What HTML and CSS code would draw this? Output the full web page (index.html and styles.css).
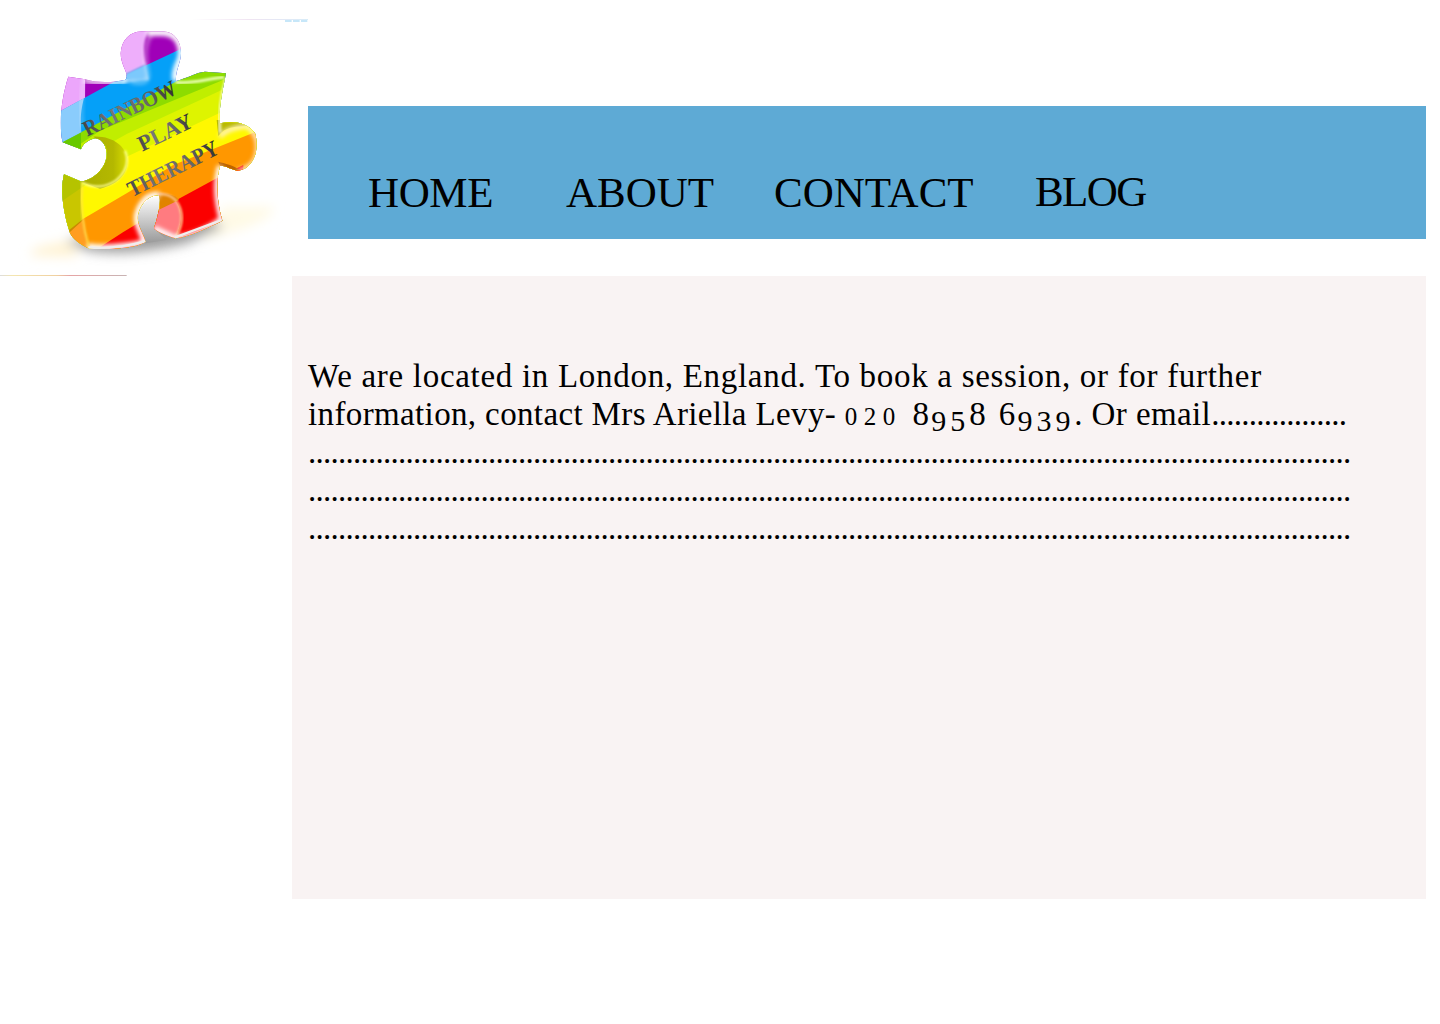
FILE: index.html
```html
<!DOCTYPE html>
<html lang="en">
<head>
<meta charset="utf-8">
<title>Rainbow Play Therapy</title>
<link rel="stylesheet" href="styles.css">
</head>
<body>
<header class="header">
  <svg class="logo" viewBox="0 27 924 771" role="img" aria-label="Rainbow Play Therapy">
    <defs>
      <clipPath id="piece"><path d="M205 200L255 208C300 222 350 215 375 210C392 195 362 170 362 130C364 90 390 65 425 64L490 64C525 66 543 95 543 130C542 160 525 185 528 213C560 205 590 187 615 185L678 190C668 240 655 300 660 340C700 333 740 335 765 370C780 420 760 475 715 482C690 480 675 465 660 468C645 520 652 580 667 632C630 650 570 680 525 685C495 675 470 665 462 655C480 600 482 570 478 555C440 555 415 590 413 625C415 655 435 680 436 695C410 715 320 720 265 715C240 700 220 690 210 668C190 610 180 540 192 493L245 515C275 510 320 480 320 430C318 400 300 385 285 385C265 390 250 400 243 418L188 397C175 340 185 260 205 200Z"/></clipPath>
      <filter id="b3"><feGaussianBlur stdDeviation="3"/></filter>
      <filter id="b6" x="-30%" y="-30%" width="160%" height="160%"><feGaussianBlur stdDeviation="6"/></filter>
      <filter id="b18" x="-40%" y="-60%" width="180%" height="220%"><feGaussianBlur stdDeviation="18"/></filter>
      <linearGradient id="ink"><stop offset="0" stop-color="#444"/><stop offset=".3" stop-color="#777"/><stop offset=".7" stop-color="#666"/><stop offset="1" stop-color="#2c2c2c"/></linearGradient>
      <linearGradient id="olive" x1="0" y1="0" x2="1" y2="0"><stop offset="0" stop-color="#a9ad00"/><stop offset=".7" stop-color="#b4b800"/><stop offset="1" stop-color="#d8dc00"/></linearGradient>
      <linearGradient id="hole" x1="0" y1="0" x2="0" y2="1"><stop offset="0" stop-color="#fff"/><stop offset="1" stop-color="#999"/></linearGradient>
      <linearGradient id="topline"><stop offset="0" stop-color="#fff"/><stop offset=".5" stop-color="#f0e4f2"/><stop offset="1" stop-color="#d8ecf8"/></linearGradient>
      <linearGradient id="footline"><stop offset="0" stop-color="#ddd"/><stop offset=".1" stop-color="#f4e6b0"/><stop offset=".45" stop-color="#f0d0a0"/><stop offset=".55" stop-color="#e6a5a5"/><stop offset="1" stop-color="#c8b4b4"/></linearGradient>
    </defs>
    <rect x="575" y="27" width="349" height="3" fill="url(#topline)"/>
    <path d="M855 33H922" stroke="#b5e0f7" stroke-width="4" stroke-dasharray="20 4"/>
    <rect x="0" y="795" width="380" height="3" fill="url(#footline)"/>
    <g filter="url(#b18)">
      <path d="M120 710Q60 735 120 738L230 740 220 690Z" fill="#fff3d4"/>
      <path d="M670 590L820 590Q830 620 720 660L610 690Z" fill="#fffae6"/>
      <path d="M200 690C250 745 420 735 560 700L670 650 600 610 430 600 400 670Z" fill="#8c8c8c" opacity=".85"/>
    </g>
    <path d="M413 625Q425 565 478 556Q486 600 462 655L500 690 436 700Z" fill="url(#hole)"/>
    <g clip-path="url(#piece)">
      <rect x="170" y="50" width="620" height="690" fill="#a000b8"/>
      <path d="M170 309L400 184 560 109 800 0V740H170Z" fill="#05a0f8"/>
      <path d="M170 406L530 214 800 70V740H170Z" fill="#8ddc00"/>
      <path d="M170 450L300 362 660 214 800 150V740H170Z" fill="#c0ee00"/>
      <path d="M170 490L380 372 670 238 800 190V740H170Z" fill="#def400"/>
      <path d="M170 584L380 440 665 306 800 260V740H170Z" fill="#fff800"/>
      <path d="M170 690L250 626 380 550 520 465 800 352V740H170Z" fill="#ff9700"/>
      <path d="M290 718L370 666 520 575 650 505 730 465V740H290Z" fill="#fb0000"/>
      <path d="M170 309L255 263V190H170Z" fill="#eca6fb"/>
      <path d="M170 309L252 264C240 310 242 335 244 367L170 406Z" fill="#8accfc"/>
      <path d="M350 50H455C425 90 430 130 438 165L350 208Z" fill="#eeaefb" filter="url(#b3)"/>
      <path d="M375 192L438 163L447 210L365 220Z" fill="#7cc9fc" filter="url(#b3)"/>
      <path d="M188 397L243 368V425Z" fill="#68c900"/>
      <path d="M280 380C400 375 425 510 300 536L240 515C300 500 335 450 315 405Z" fill="url(#olive)"/>
      <path d="M175 485L245 515C238 590 250 660 266 718L185 660Z" fill="#777b00" opacity=".4"/>
      <path d="M200 675L252 628L266 718H200Z" fill="#ff9d20"/>
      <path d="M655 378C675 350 705 350 740 348L700 330 650 330Z" fill="#b9b900"/>
      <path d="M655 455C675 460 700 466 720 480L665 480Z" fill="#bd6400"/>
      <path d="M475 550C535 550 560 610 530 675L510 690 455 655 480 594Z" fill="#ff7b80"/>
      <path d="M478 550C510 550 530 560 537 570L480 598Z" fill="#e18300"/>
      <path d="M478 552C540 550 565 620 525 685" fill="none" stroke="#ffc68d" stroke-width="7" filter="url(#b3)"/>
      <path d="M253 205C240 260 242 310 246 350" fill="none" stroke="#fff" stroke-width="10" opacity=".3" filter="url(#b6)"/>
      <path d="M252 210Q320 226 380 210" fill="none" stroke="#fff" stroke-width="17" opacity=".8" filter="url(#b6)"/>
      <path d="M390 214Q450 230 444 190Q425 110 455 73" fill="none" stroke="#fff" stroke-width="9" opacity=".5" filter="url(#b6)"/>
      <path d="M440 68H490C540 70 550 120 540 150Q520 190 528 213" fill="none" stroke="#fff" stroke-width="20" filter="url(#b6)"/>
      <path d="M528 217C580 222 625 205 672 202" fill="none" stroke="#efffbc" stroke-width="8" filter="url(#b3)"/>
      <path d="M678 205C668 240 655 300 660 368" fill="none" stroke="#fff" stroke-width="9" opacity=".7" filter="url(#b3)"/>
      <path d="M660 380Q680 355 740 348Q785 380 768 440Q755 475 715 482" fill="none" stroke="#fff1d6" stroke-width="12" filter="url(#b6)"/>
      <path d="M660 468C645 520 652 580 665 628C630 655 570 685 525 684L462 655" fill="none" stroke="#fff" stroke-width="17" filter="url(#b6)"/>
      <path d="M478 555C430 550 405 610 413 640L436 698Q330 720 262 709" fill="none" stroke="#fff" stroke-width="19" filter="url(#b6)"/>
      <path d="M245 517Q300 545 350 510Q395 470 375 422" fill="none" stroke="#ffff9b" stroke-width="6" filter="url(#b3)"/>
      <path d="M246 520Q238 620 267 710" fill="none" stroke="#ffe24a" stroke-width="5" filter="url(#b3)"/>
    </g>
    <path d="M265 712Q350 719 436 693M525 682L665 630" fill="none" stroke="#eee" stroke-width="7"/>
    <g class="logo-text" fill="url(#ink)">
      <text transform="translate(262 380) rotate(-25.5)" textLength="302" lengthAdjust="spacingAndGlyphs">RAINBOW</text>
      <text transform="translate(427 425) rotate(-26)" textLength="174" lengthAdjust="spacingAndGlyphs">PLAY</text>
      <text transform="translate(396 562) rotate(-26.5)" textLength="296" lengthAdjust="spacingAndGlyphs">THERAPY</text>
    </g>
  </svg>
  <nav class="nav">
    <a class="nav-home">HOME</a>
    <a class="nav-about">ABOUT</a>
    <a class="nav-contact">CONTACT</a>
    <a class="nav-blog">BLOG</a>
  </nav>
</header>
<main class="content">
  <p class="line intro">We are located in London, England. To book a session, or for further</p>
  <p class="line"><span class="contact">information, contact Mrs Ariella Levy- </span><span class="phone"><span class="small">020</span> 8<span class="low">95</span>8 6<span class="low">939</span></span><span class="email">. Or email</span><span class="dots">..................</span></p>
  <p class="line dots">...........................................................................................................................................</p>
  <p class="line dots">...........................................................................................................................................</p>
  <p class="line dots">...........................................................................................................................................</p>
</main>
</body>
</html>
```
FILE: styles.css
```css
body {
  margin: 0;
  background: #fff;
  color: #000;
  font-family: "Liberation Serif", serif;
}

.header {
  display: flex;
  align-items: flex-start;
  height: 257px;
  padding-top: 19px;
}

.logo {
  flex: none;
  width: 308px;
  height: 257px;
}

.logo-text {
  font: bold 67px "Liberation Serif", serif;
}

.nav {
  display: flex;
  box-sizing: border-box;
  width: 1118px;
  height: 133px;
  margin-top: 87px;
  padding: 62px 0 0 60px;
  background: #5eaad5;
  font-size: 43px;
  line-height: 50px;
}

.nav-home {
  width: 198px;
  letter-spacing: -0.4px;
}

.nav-about {
  width: 208px;
}

.nav-contact {
  width: 261px;
}

.nav-blog {
  margin-top: -1px;
  letter-spacing: -1.6px;
}

.content {
  box-sizing: border-box;
  width: 1134px;
  height: 623px;
  margin-left: 292px;
  padding: 81px 16px 0;
  background: #f9f3f3;
}

.line {
  height: 38px;
  margin: 0;
  font-size: 33px;
  line-height: 38px;
  white-space: pre;
}

.intro {
  letter-spacing: 0.7px;
}

.contact {
  letter-spacing: 0.37px;
}

.phone {
  letter-spacing: 2.4px;
}

.small {
  font-size: 25px;
  letter-spacing: 6.5px;
}

.low {
  position: relative;
  top: 6px;
  font-size: 30px;
  line-height: 30px;
  letter-spacing: 3.9px;
}

.email {
  letter-spacing: 0.4px;
}

.dots {
  letter-spacing: -0.75px;
}
```
